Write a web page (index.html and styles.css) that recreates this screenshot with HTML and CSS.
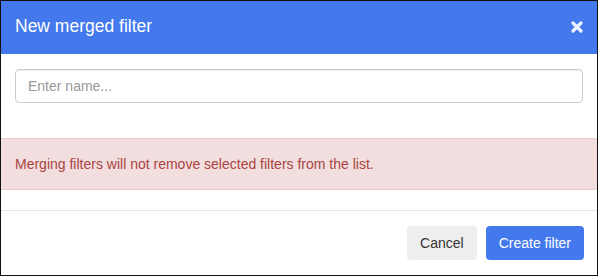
FILE: index.html
```html
<!DOCTYPE html>
<html lang="en">
<head>
  <meta charset="UTF-8" />
  <title>New merged filter</title>
  <link rel="stylesheet" href="styles.css">
</head>
<body>
  <div class="modal">
    <div class="modal-header">
      <h4 class="modal-title">New merged filter</h4>
      <button class="close" aria-label="Close">
        <svg width="12" height="12" viewBox="0 0 12 12">
          <path d="M2 2 L10 10 M10 2 L2 10" stroke="#fff" stroke-width="3.2" stroke-linecap="round" />
        </svg>
      </button>
    </div>
    <div class="modal-body">
      <input class="form-control" type="text" placeholder="Enter name...">
      <div class="alert">Merging filters will not remove selected filters from the list.</div>
    </div>
    <div class="modal-footer">
      <button class="btn btn-default">Cancel</button>
      <button class="btn btn-primary">Create filter</button>
    </div>
  </div>
</body>
</html>
```

FILE: styles.css
```css
* {
  margin: 0;
  padding: 0;
  box-sizing: border-box;
}

body {
  font-family: "Liberation Sans", Arial, sans-serif;
  font-size: 14px;
  color: #333;
  background: #fff;
}

.modal {
  width: 598px;
  height: 276px;
  border: 1px solid #111;
  display: flex;
  flex-direction: column;
}

.modal-header {
  height: 53px;
  background-color: #4479ee;
  padding: 0 14px;
  display: flex;
  align-items: center;
  justify-content: space-between;
}

.modal-title {
  font-size: 17.5px;
  font-weight: 400;
  color: #fff;
  line-height: 1;
  margin-top: -1px;
}

.close {
  border: none;
  background: none;
  width: 12px;
  height: 12px;
  display: flex;
  margin-right: 0;
  margin-top: -1px;
  opacity: 0.9;
  cursor: pointer;
}

.modal-body {
  padding: 15px 0 20px 0;
  height: 156px;
}

.form-control {
  display: block;
  width: 568px;
  height: 34px;
  margin: 0 14px;
  padding: 6px 12px;
  border: 1px solid #ccc;
  border-radius: 4px;
  font-family: inherit;
  font-size: 14px;
  color: #555;
  box-shadow: inset 0 1px 1px rgba(0, 0, 0, 0.075);
}

.form-control::placeholder {
  color: #999;
}

.alert {
  margin-top: 35px;
  height: 52px;
  padding: 0 14px;
  display: flex;
  align-items: center;
  background-color: #f2dede;
  border: 1px solid #ebccd1;
  border-left: none;
  border-right: none;
  color: #a94442;
}

.modal-footer {
  flex: 1;
  border-top: 1px solid #e5e5e5;
  padding: 15px 13px 15px 14px;
  display: flex;
  justify-content: flex-end;
  align-items: flex-start;
  gap: 9px;
}

.btn {
  height: 34px;
  padding: 0 13px;
  border: none;
  border-radius: 4px;
  font-family: inherit;
  font-size: 14px;
  cursor: pointer;
}

.btn-default {
  background-color: #eee;
  color: #333;
}

.btn-primary {
  background-color: #4479ee;
  color: #fff;
}
```
